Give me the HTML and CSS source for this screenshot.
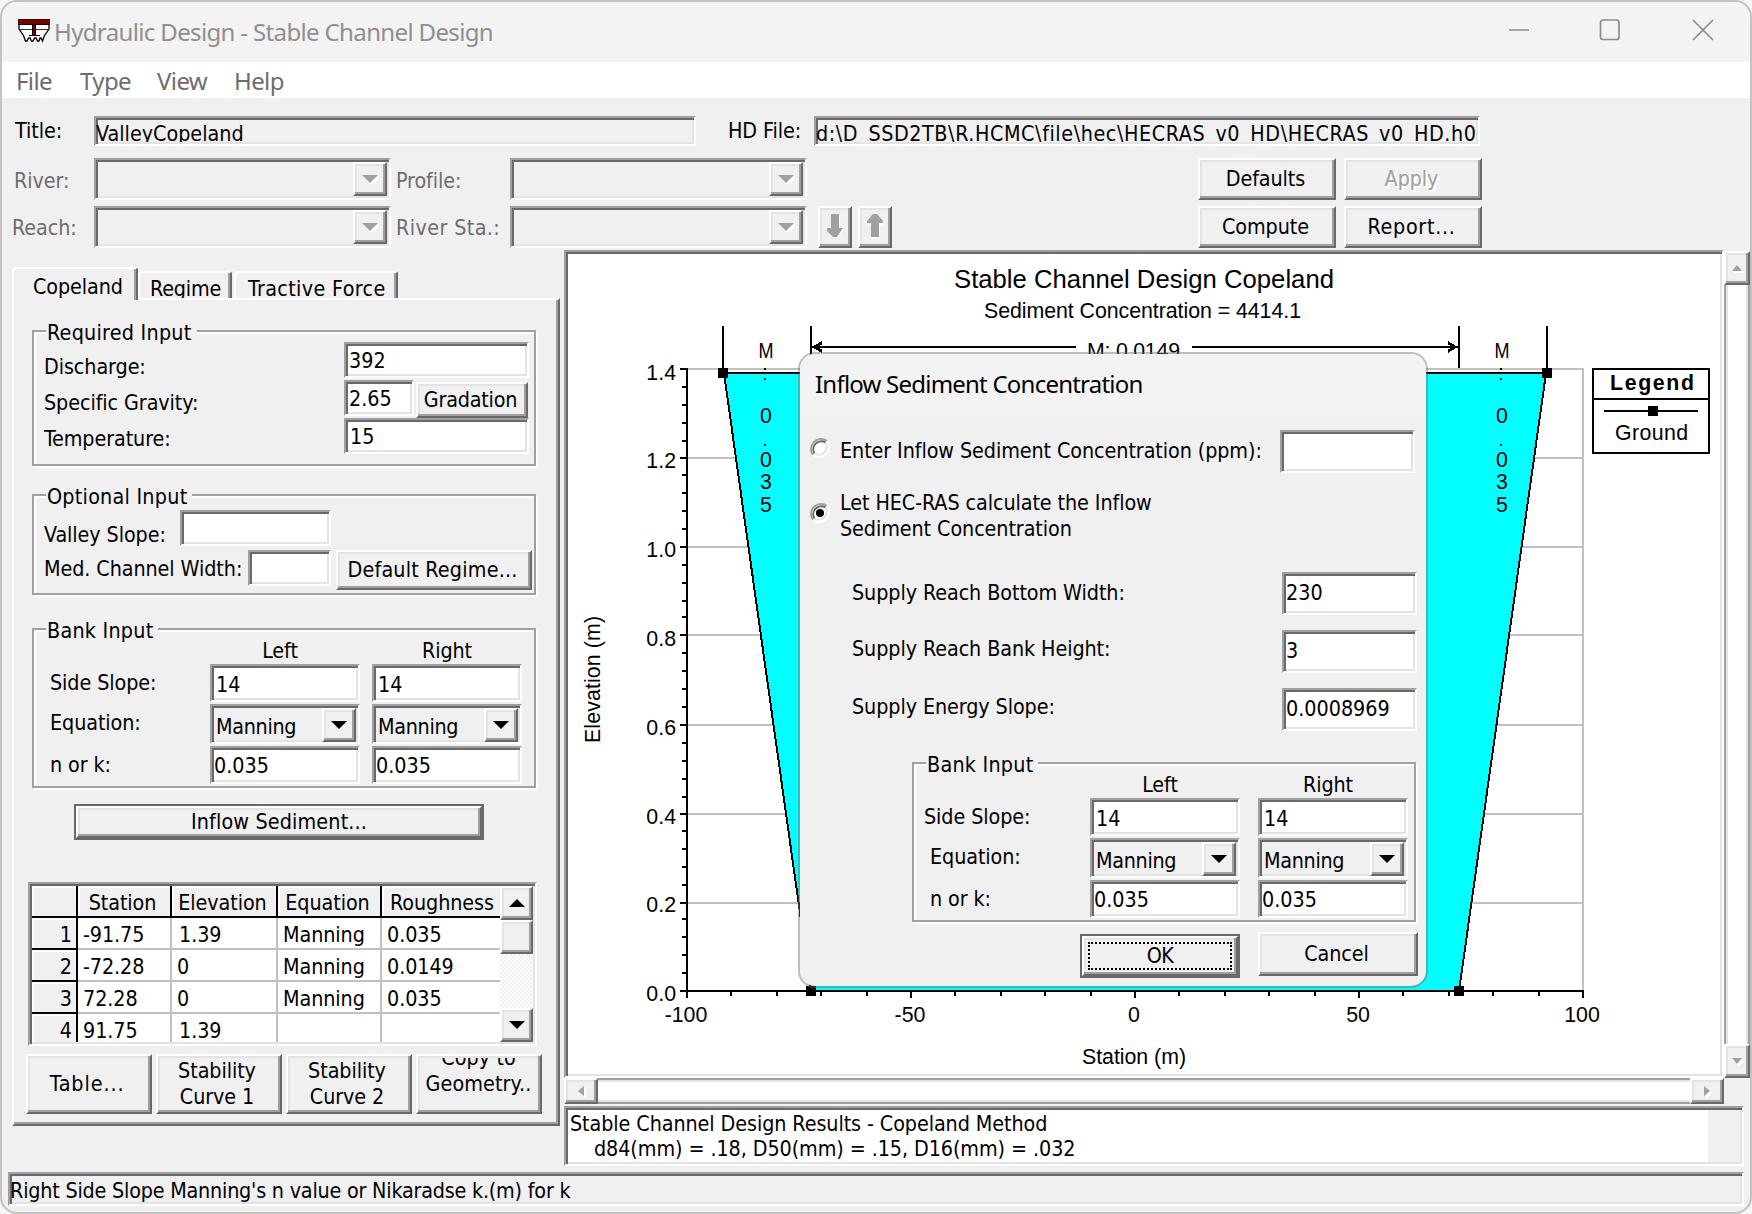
FILE: index.html
```html
<!DOCTYPE html>
<html lang="en">
<head>
<meta charset="utf-8">
<title>Hydraulic Design - Stable Channel Design</title>
<link rel="stylesheet" href="styles.css">
</head>
<body>
<div class="window">
  <header class="titlebar">
    <svg class="app-icon" width="32" height="24" viewBox="0 0 32 24">
      <path d="M0 5H32V10L26 17L24 22L8 22L6 17L0 10Z" fill="#fff"/>
      <path d="M1 5V10L5.500 16.500L7.500 22H9L10.500 19H12L13.500 22H15L16.500 19H18L19.500 22H21L22 19H23L24.500 22L26.500 16.500L31 10V5" stroke="#000" stroke-width="1.3" fill="none"/>
      <g shape-rendering="crispEdges">
        <path d="M2 10H30" stroke="#2020c0" stroke-width="1"/>
        <rect x="0" y="0" width="32" height="5" fill="#800000"/>
        <rect x="0" y="5" width="32" height="1" fill="#000"/>
        <rect x="0" y="0" width="32" height="1" fill="#400000"/>
        <rect x="14" y="6" width="4" height="11" fill="#000"/><rect x="15" y="6" width="2" height="10" fill="#800000"/>
        <rect x="11" y="16" width="11" height="1" fill="#000"/>
      </g>
    </svg>
    <h1 class="caption">Hydraulic Design - Stable Channel Design</h1>
    <svg class="win-controls" width="206" height="24" viewBox="0 0 206 24" fill="none" stroke="#8c8c8c" stroke-width="1.700">
      <path d="M1 12H21"/><rect x="92.500" y="2" width="18.500" height="19.500" rx="2.500"/><path d="M185 2L205 22M205 2L185 22"/>
    </svg>
  </header>
  <nav class="menubar"><span class="m-file">File</span><span class="m-type">Type</span><span class="m-view">View</span><span class="m-help">Help</span></nav>

  <section class="toolbar">
    <div class="tool-row first">
      <span class="label l-title">Title:</span>
      <div class="sunken readout r-title"><span>ValleyCopeland</span></div>
      <span class="label l-hd">HD File:</span>
      <div class="sunken readout r-hd"><span>d:\D_SSD2TB\R.HCMC\file\hec\HECRAS_v0_HD\HECRAS_v0_HD.h02</span></div>
    </div>
    <div class="tool-row">
      <span class="label dim l-river">River:</span>
      <div class="sunken combo top-combo"><i class="raised drop off"></i></div>
      <span class="label dim l-mid">Profile:</span>
      <div class="sunken combo top-combo"><i class="raised drop off"></i></div>
      <button class="raised btn tool-btn at-defaults">Defaults</button>
      <button class="raised btn tool-btn disabled">Apply</button>
    </div>
    <div class="tool-row">
      <span class="label dim l-reach">Reach:</span>
      <div class="sunken combo top-combo"><i class="raised drop off"></i></div>
      <span class="label dim l-mid wide">River Sta.:</span>
      <div class="sunken combo top-combo"><i class="raised drop off"></i></div>
      <button class="raised btn arrow-btn down"><svg width="18" height="26" viewBox="0 0 18 26"><path d="M6 2H14V15H18L11 24H9L2 17H6Z" fill="#fff"/><path d="M5 0H13V14H17L11 23H7L1 17V14H5Z" fill="#a0a0a0"/></svg></button>
      <button class="raised btn arrow-btn up"><svg width="18" height="26" viewBox="0 0 18 26"><path d="M6 25V11H3L9 3H11L18 12H14V25Z" fill="#fff"/><path d="M5 23V9H1V7L7 0H11L17 7V9H13V23Z" fill="#a0a0a0"/></svg></button>
      <button class="raised btn tool-btn at-compute">Compute</button>
      <button class="raised btn tool-btn dots">Report...</button>
    </div>
  </section>

  <main class="main">
    <section class="left">
      <div class="tabs"><div class="tab active">Copeland</div><div class="tab t-regime">Regime</div><div class="tab t-tractive">Tractive Force</div></div>
      <div class="panel">
        <div class="group required">
          <div class="legend">Required Input</div>
          <div class="req-body">
            <div class="req-labels"><div>Discharge:</div><div>Specific Gravity:</div><div>Temperature:</div></div>
            <div class="req-fields">
              <div class="sunken field">392</div>
              <div class="req-pair"><div class="sunken field gravity">2.65</div><button class="raised btn gradation">Gradation</button></div>
              <div class="sunken field temp">15</div>
            </div>
          </div>
        </div>
        <div class="group optional">
          <div class="legend">Optional Input</div>
          <div class="opt-row one"><span class="label">Valley Slope:</span><div class="sunken field"></div></div>
          <div class="opt-row two"><span class="label">Med. Channel Width:</span><div class="sunken field"></div><button class="raised btn regime-btn">Default Regime...</button></div>
        </div>
        <div class="group bank">
          <div class="legend">Bank Input</div>
          <div class="bank-grid">
            <span></span><span class="head h-left">Left</span><span class="head">Right</span>
            <span class="label">Side Slope:</span><div class="sunken field slope">14</div><div class="sunken field slope">14</div>
            <span class="label">Equation:</span><div class="sunken combo">Manning<i class="raised drop"></i></div><div class="sunken combo">Manning<i class="raised drop"></i></div>
            <span class="label">n or k:</span><div class="sunken field">0.035</div><div class="sunken field">0.035</div>
          </div>
        </div>
        <button class="btn default-btn inflow"><span class="raised face">Inflow Sediment...</span></button>
        <div class="sunken sheet">
          <div class="cells">
            <div class="th corner"></div><div class="th">Station</div><div class="th elev">Elevation</div><div class="th">Equation</div><div class="th rough">Roughness</div>
            <div class="rh">1</div><div>-91.75</div><div class="sp">1.39</div><div>Manning</div><div>0.035</div>
            <div class="rh">2</div><div>-72.28</div><div>0</div><div>Manning</div><div>0.0149</div>
            <div class="rh">3</div><div>72.28</div><div>0</div><div>Manning</div><div>0.035</div>
            <div class="rh">4</div><div>91.75</div><div class="sp">1.39</div><div></div><div></div>
          </div>
          <div class="sheet-scroll"><i class="raised tri-up"></i><i class="raised thumb"></i><b></b><i class="raised tri-down"></i></div>
        </div>
        <div class="bottom-btns">
          <button class="raised btn table-btn">Table...</button>
          <button class="raised btn">Stability<br>Curve 1</button>
          <button class="raised btn">Stability<br>Curve 2</button>
          <button class="raised btn copy"><span class="clip"><span class="copy-text">Copy to<br>Geometry..</span></span></button>
        </div>
      </div>
    </section>

    <section class="right">
      <div class="plot-row">
        <div class="sunken plot">
          <svg class="chart" width="1152" height="820" viewBox="568 254 1152 820">
            <g stroke="#c0c0c0" stroke-width="2" shape-rendering="crispEdges" fill="none">
              <path d="M688 369H1584M688 458H1584M688 547H1584M688 635H1584M688 725H1584M688 814H1584M688 903H1584M1583 368V991"/>
            </g>
            <path d="M724 373H1546L1459 991H811Z" fill="#0ff" shape-rendering="crispEdges"/>
            <g stroke="#000" stroke-width="2" shape-rendering="crispEdges" fill="none">
              <path d="M723 373H1547"/>
              <path d="M724 373L811 991M1459 991L1546 373"/>
              <path d="M687 368V998M680 991H1584"/>
              <path d="M680 369H687M680 458H687M680 547H687M680 635H687M680 725H687M680 814H687M680 903H687"/>
              <path d="M682 387H687M682 405H687M682 423H687M682 441H687M682 475H687M682 493H687M682 511H687M682 529H687M682 565H687M682 583H687M682 601H687M682 617H687M682 653H687M682 671H687M682 689H687M682 707H687M682 743H687M682 761H687M682 779H687M682 797H687M682 831H687M682 849H687M682 867H687M682 885H687M682 919H687M682 937H687M682 955H687M682 973H687"/>
              <path d="M911 991V998M1135 991V998M1359 991V998M1583 991V998"/>
              <path d="M731 991V996M777 991V996M821 991V996M867 991V996M955 991V996M1001 991V996M1045 991V996M1091 991V996M1179 991V996M1225 991V996M1269 991V996M1315 991V996M1403 991V996M1449 991V996M1493 991V996M1539 991V996"/>
              <path d="M723 326V373M811 326V369M1459 326V368M1547 326V373M812 347H1076M1192 347H1458"/>
              <rect x="1593" y="369" width="116" height="84"/><path d="M1593 399H1709M1604 411H1698"/>
            </g>
            <g fill="#000" shape-rendering="crispEdges">
              <path d="M812 347L822 341V345H820V349H822V353ZM1458 347L1448 341V345H1450V349H1448V353Z"/>
              <rect x="718" y="368" width="10" height="10"/><rect x="1542" y="368" width="10" height="10"/>
              <rect x="806" y="986" width="10" height="10"/><rect x="1454" y="986" width="10" height="10"/>
              <rect x="1648" y="406" width="10" height="10"/>
              <path d="M764 368h2v2h-2zM764 378h2v2h-2zM764 444h2v2h-2zM1500 368h2v2h-2zM1500 378h2v2h-2zM1500 444h2v2h-2z"/>
            </g>
            <text class="t-main" x="954" y="288" textLength="380" lengthAdjust="spacingAndGlyphs">Stable Channel Design Copeland</text>
            <text x="984" y="318" textLength="317">Sediment Concentration = 4414.1</text>
            <text x="1087" y="358" textLength="93">M: 0.0149</text>
            <g text-anchor="end"><text x="676" y="380">1.4</text><text x="676" y="468">1.2</text><text x="676" y="557">1.0</text><text x="676" y="646">0.8</text><text x="676" y="735">0.6</text><text x="676" y="824">0.4</text><text x="676" y="912">0.2</text><text x="676" y="1001">0.0</text></g>
            <g text-anchor="middle"><text x="686" y="1022">-100</text><text x="910" y="1022">-50</text><text x="1134" y="1022">0</text><text x="1358" y="1022">50</text><text x="1582" y="1022">100</text></g>
            <g text-anchor="middle"><text x="766" y="358" textLength="15" lengthAdjust="spacingAndGlyphs">M</text><text x="766" y="423">0</text><text x="766" y="467">0</text><text x="766" y="489">3</text><text x="766" y="512">5</text></g>
            <g text-anchor="middle"><text x="1502" y="358" textLength="15" lengthAdjust="spacingAndGlyphs">M</text><text x="1502" y="423">0</text><text x="1502" y="467">0</text><text x="1502" y="489">3</text><text x="1502" y="512">5</text></g>
            <text x="1082" y="1064" textLength="104">Station (m)</text>
            <text transform="translate(600 743) rotate(-90)" textLength="127">Elevation (m)</text>
            <text class="t-bold" x="1610" y="390" textLength="84">Legend</text>
            <text x="1615" y="440" textLength="73">Ground</text>
          </svg>
        </div>
        <div class="vscroll"><i class="raised sb-up"></i><b></b><i class="raised sb-down"></i></div>
      </div>
      <div class="hscroll"><i class="raised sb-left"></i><b></b><i class="raised sb-right"></i></div>
      <div class="sunken results"><div class="lines"><div>Stable Channel Design Results - Copeland Method</div><div class="indent">d84(mm) = .18, D50(mm) = .15, D16(mm) = .032</div></div></div>
    </section>
  </main>
  <footer class="sunken status">Right Side Slope Manning's n value or Nikaradse k.(m) for k</footer>

  <div class="dialog">
    <div class="dlg-title">Inflow Sediment Concentration</div>
    <div class="dlg-row choice1">
      <svg class="radio" width="22" height="22" viewBox="0 0 22 22"><circle cx="11" cy="11" r="9" fill="#fff"/><path d="M4 18A10 10 0 0 1 18 4" fill="none" stroke="#a0a0a0" stroke-width="2"/><path d="M5.500 16.500A8 8 0 0 1 16.500 5.500" fill="none" stroke="#696969" stroke-width="2"/><path d="M18 4A10 10 0 0 1 4 18" fill="none" stroke="#fff" stroke-width="2"/><path d="M16.500 5.500A8 8 0 0 1 5.500 16.500" fill="none" stroke="#e3e3e3" stroke-width="2"/></svg>
      <span class="label">Enter Inflow Sediment Concentration (ppm):</span>
      <div class="sunken field tall"></div>
    </div>
    <div class="dlg-row choice2">
      <svg class="radio" width="22" height="22" viewBox="0 0 22 22"><circle cx="11" cy="11" r="9" fill="#fff"/><path d="M4 18A10 10 0 0 1 18 4" fill="none" stroke="#a0a0a0" stroke-width="2"/><path d="M5.500 16.500A8 8 0 0 1 16.500 5.500" fill="none" stroke="#696969" stroke-width="2"/><path d="M18 4A10 10 0 0 1 4 18" fill="none" stroke="#fff" stroke-width="2"/><path d="M16.500 5.500A8 8 0 0 1 5.500 16.500" fill="none" stroke="#e3e3e3" stroke-width="2"/><circle cx="11" cy="11" r="4" fill="#000"/></svg>
      <span class="label">Let HEC-RAS calculate the Inflow<br>Sediment Concentration</span>
    </div>
    <div class="supply">
      <div class="dlg-row"><span class="label s1">Supply Reach Bottom Width:</span><div class="sunken field tall">230</div></div>
      <div class="dlg-row"><span class="label s2">Supply Reach Bank Height:</span><div class="sunken field tall">3</div></div>
      <div class="dlg-row"><span class="label s2">Supply Energy Slope:</span><div class="sunken field tall">0.0008969</div></div>
    </div>
    <div class="group bank dlg-bank">
      <div class="legend">Bank Input</div>
      <div class="bank-grid">
        <span></span><span class="head h-left">Left</span><span class="head r-head">Right</span>
        <span class="label out">Side Slope:</span><div class="sunken field slope">14</div><div class="sunken field slope">14</div>
        <span class="label">Equation:</span><div class="sunken combo">Manning<i class="raised drop"></i></div><div class="sunken combo">Manning<i class="raised drop"></i></div>
        <span class="label">n or k:</span><div class="sunken field">0.035</div><div class="sunken field">0.035</div>
      </div>
    </div>
    <div class="dlg-btns">
      <button class="btn default-btn ok"><span class="raised face"><span class="focus">OK</span></span></button>
      <button class="raised btn cancel">Cancel</button>
    </div>
  </div>
</div>
</body>
</html>
```
FILE: styles.css
```css
* { box-sizing: border-box; }
body { margin: 0; background: #f4f4f4; overflow: hidden; }

.window {
  position: relative;
  display: flex;
  flex-direction: column;
  width: 1752px;
  height: 1214px;
  border: 2px solid #c3c3c3;
  border-radius: 17px;
  overflow: hidden;
  background: #f0f0f0;
  color: #000;
  font: 21.33px/26px "DejaVu Sans Condensed", "DejaVu Sans", sans-serif;
  font-stretch: condensed;
  letter-spacing: -0.08px;
  white-space: nowrap;
}
.window > * { flex: none; }

/* bevels */
.sunken {
  border: 2px solid;
  border-color: #a0a0a0 #fff #fff #a0a0a0;
  box-shadow: inset 2px 2px 0 #696969, inset -2px -2px 0 #e3e3e3;
}
.raised {
  border: 2px solid;
  border-color: #fff #696969 #696969 #fff;
  box-shadow: inset -2px -2px 0 #a0a0a0, inset 2px 2px 0 #e3e3e3;
  background: #f0f0f0;
}
.btn {
  display: flex;
  align-items: center;
  justify-content: center;
  margin: 0;
  padding: 0 3px 0 0;
  font: inherit;
  letter-spacing: inherit;
  color: #000;
  flex: none;
}
.disabled { color: #a0a0a0; text-shadow: 2px 2px 0 #fff; }
.default-btn { padding: 0; border: 2px solid #696969; background: #696969; }
.face { display: flex; align-items: center; justify-content: center; width: 100%; height: 100%; }
.label { flex: none; }
.dim { color: #6d6d6d; }
.dots { letter-spacing: 0.7px; }

/* caption and menu */
.titlebar {
  display: flex;
  align-items: flex-start;
  height: 60px;
  padding-left: 16px;
  background: #f3f3f3;
}
.app-icon { margin-top: 17px; }
.caption {
  margin: 0 0 0 4px;
  width: 1454px;
  font: 400 24px/60px "Noto Sans", sans-serif;
  letter-spacing: -0.64px;
  color: #8f8f8f;
}
.win-controls { margin-top: 16px; }
.menubar {
  display: flex;
  height: 36px;
  padding: 1px 0 0 14px;
  background: #fff;
  color: #6d6d6d;
  font: 24px/36px "Noto Sans", sans-serif;
  letter-spacing: -0.6px;
}
.m-file { width: 64px; }
.m-type { width: 77px; }
.m-view { width: 77px; }

/* toolbar */
.toolbar { height: 152px; padding-top: 18px; }
.tool-row { display: flex; align-items: flex-start; height: 48px; }
.tool-row.first { height: 42px; }
.l-title { margin: 2px 0 0 13px; width: 79px; }
.l-hd { margin: 2px 0 0 32px; width: 86px; }
.readout { height: 30px; }
.readout span { display: block; margin: 2px 2px 0 0; height: 22px; padding-top: 1px; overflow: hidden; }
.r-title { width: 602px; }
.r-title span { letter-spacing: 0; }
.r-hd { width: 666px; }
.r-hd span { letter-spacing: 0.58px; }
.l-river { margin: 10px 0 0 12px; width: 80px; }
.l-reach { margin: 9px 0 0 10px; width: 82px; }
.l-mid { margin: 10px 0 0 5px; width: 114px; }
.l-mid.wide { margin-top: 9px; letter-spacing: 0.4px; }
.combo { display: flex; justify-content: space-between; padding: 8px 2px 2px 4px; flex: none; letter-spacing: -0.3px; }
.top-combo { width: 297px; height: 42px; padding: 2px; justify-content: flex-end; }
.drop {
  display: flex;
  align-items: center;
  justify-content: center;
  width: 34px;
  height: 34px;
  flex: none;
}
.drop::before { content: ""; border: 8px solid transparent; border-top: 8px solid #000; border-bottom: 0; }
.drop.off::before { border-top-color: #a0a0a0; filter: drop-shadow(2px 2px 0 #fff); }
.bank .drop { margin-top: -6px; }
.tool-btn { width: 138px; height: 42px; margin-left: 8px; }
.at-defaults { margin-left: 391px; }
.at-compute { margin-left: 306px; }
.arrow-btn { width: 34px; height: 42px; margin-left: 6px; padding: 0; }
.arrow-btn.down { margin-left: 11px; }

/* left side */
.main { display: flex; height: 916px; }
.left { width: 562px; padding: 17px 0 0 10px; }
.tabs { display: flex; align-items: flex-end; height: 31px; }
.tab {
  height: 27px;
  border: solid;
  border-width: 2px 2px 0 2px;
  border-color: #fff #696969 #fff #fff;
  border-radius: 5px 3px 0 0;
  box-shadow: inset -2px 0 0 #a0a0a0;
  overflow: hidden;
  padding: 3px 0 0 10px;
  background: #f0f0f0;
}
.tab.active { position: relative; height: 33px; width: 126px; margin-bottom: -2px; padding: 5px 0 0 19px; }
.t-regime { width: 94px; letter-spacing: -0.2px; }
.t-tractive { width: 164px; margin-left: 2px; padding-left: 12px; letter-spacing: 0.35px; }
.panel {
  width: 548px;
  height: 828px;
  border: 2px solid;
  border-color: #fff #696969 #696969 #fff;
  box-shadow: inset -2px -2px 0 #a0a0a0;
  padding-top: 30px;
}
.group {
  width: 504px;
  margin-left: 18px;
  border: 2px solid #a0a0a0;
  box-shadow: 2px 2px 0 #fff, inset 2px 2px 0 #fff;
}
.legend { width: fit-content; height: 26px; margin: -13px 0 0 12px; padding: 1px 5px 0 1px; background: #f0f0f0; letter-spacing: 0.25px; }
.required { height: 136px; }
.optional { height: 101px; margin-top: 28px; }
.bank { height: 160px; margin-top: 33px; }
.field { height: 36px; padding: 4px 2px 0 3px; flex: none; background: #fff; letter-spacing: 0; }
.req-body { display: flex; align-items: flex-start; padding-left: 10px; }
.req-labels { width: 300px; margin-top: 4px; line-height: 36px; }
.req-fields { display: flex; flex-direction: column; gap: 2px; width: 185px; margin-top: -3px; }
.req-pair { display: flex; height: 36px; }
.gravity { width: 70px; }
.temp { padding-left: 4px; }
.gradation { width: 112px; height: 36px; margin: 2px 0 0 2px; letter-spacing: -0.2px; }
.opt-row { display: flex; align-items: flex-start; padding-left: 10px; height: 40px; }
.opt-row.one { margin-top: 1px; }
.one .label { width: 136px; margin-top: 12px; }
.one .field { width: 151px; }
.two .label { width: 204px; margin-top: 6px; }
.two .field { width: 83px; }
.regime-btn { width: 196px; height: 40px; margin-left: 5px; letter-spacing: 0.2px; }
.bank-grid {
  display: grid;
  grid-template-columns: 160px 150px 150px;
  grid-template-rows: 26px 40px 42px 38px;
  column-gap: 0;
  margin: -5px 0 0 16px;
}
.bank-grid > :nth-child(3n) { margin-left: 12px; margin-right: -12px; }
.bank-grid .head { text-align: center; }
.bank-grid .h-left { padding-right: 10px; }
.bank-grid .label { margin-top: 6px; }
.bank-grid .field { height: 38px; padding-top: 5px; padding-left: 2px; }
.bank-grid .slope { padding-left: 4px; padding-top: 6px; }
.bank-grid .combo { height: 40px; }
.inflow { width: 410px; height: 36px; margin: 16px 0 0 60px; letter-spacing: 0.15px; }
.sheet { display: flex; width: 509px; height: 164px; margin: 42px 0 0 14px; padding: 2px; overflow: hidden; }
.cells {
  display: grid;
  grid-template-columns: 46px 94px 106px 104px 118px;
  grid-auto-rows: 32px;
  height: 156px;
  width: 468px;
  overflow: hidden;
  background: #fff;
}
.cells > div { padding: 4px 0 0 5px; border: solid #c0c0c0; border-width: 0 2px 2px 0; }
.cells > div:nth-child(5n) { border-right: 0; }
.cells > .sp { padding-left: 7px; }
.cells > .th { padding: 4px 3px 0 0; text-align: center; background: #f0f0f0; border-color: #000; box-shadow: inset 2px 2px 0 #fff; }
.cells > .rough { text-align: left; padding-left: 8px; }
.cells > .rh { text-align: right; padding: 4px 4px 0 0; background: #f0f0f0; border-color: #000; box-shadow: inset 2px 2px 0 #fff; }
.sheet-scroll { display: flex; flex-direction: column; width: 33px; height: 156px; }
.sheet-scroll i, .vscroll i, .hscroll i { display: flex; align-items: center; justify-content: center; height: 34px; flex: none; }
.sheet-scroll b { flex: 1; background: repeating-conic-gradient(#f0f0f0 0 25%, #fff 0 50%) 0 0 / 4px 4px; }
.tri-up::before { content: ""; border: 8px solid transparent; border-bottom: 8px solid #000; border-top: 0; }
.tri-down::before { content: ""; border: 8px solid transparent; border-top: 8px solid #000; border-bottom: 0; }
.bottom-btns { display: flex; gap: 4px; margin: 8px 0 0 12px; }
.bottom-btns .btn { width: 126px; height: 60px; padding-right: 4px; }
.bottom-btns .table-btn { letter-spacing: 0.9px; }
.bottom-btns .copy { align-items: flex-start; padding-right: 1px; letter-spacing: 0.1px; }
.clip { display: block; height: 52px; margin-top: 2px; overflow: hidden; }
.copy-text { display: block; margin-top: -13px; }

/* plot */
.right { width: 1186px; }
.plot-row { display: flex; height: 828px; }
.plot { width: 1160px; height: 828px; padding: 2px; background: #fff; }
.chart { display: block; font: 21.33px "Liberation Sans", Arial, sans-serif; letter-spacing: 0; }
.t-main { font-size: 26.67px; }
.t-bold { font-weight: 700; }
.vscroll { display: flex; flex-direction: column; width: 26px; height: 828px; padding-top: 1px; }
.vscroll b { flex: 1; background: #fff; border: solid #a0a0a0; border-width: 0 2px; box-shadow: inset 2px 0 0 #e3e3e3, inset -2px 0 0 #e3e3e3; }
.hscroll { display: flex; width: 1160px; height: 26px; }
.hscroll b { flex: 1; background: #fff; border: solid #a0a0a0; border-width: 2px 0; box-shadow: inset 0 2px 0 #e3e3e3, inset 0 -2px 0 #e3e3e3; }
.hscroll i { width: 34px; height: 26px; }
.sb-up::before, .sb-down::before, .sb-left::before, .sb-right::before { content: ""; border: 5px solid transparent; filter: drop-shadow(2px 2px 0 #fff); }
.sb-up::before { border-bottom: 6px solid #a0a0a0; border-top: 0; }
.sb-down::before { border-top: 6px solid #a0a0a0; border-bottom: 0; }
.sb-left::before { border-right: 6px solid #a0a0a0; border-left: 0; }
.sb-right::before { border-left: 6px solid #a0a0a0; border-right: 0; }
.results { width: 1180px; height: 60px; margin-top: 2px; padding: 2px; }
.lines { width: 1140px; height: 52px; padding: 1px 0 0 2px; background: #fff; }
.indent { padding-left: 24px; margin-top: -1px; }
.status { width: 1736px; height: 34px; margin: 6px 0 0 6px; padding: 4px 0 0 0; letter-spacing: -0.2px; }

/* dialog over the plot */
.dialog {
  position: absolute;
  left: 796px;
  top: 350px;
  width: 630px;
  height: 636px;
  border: 2px solid rgba(110, 110, 110, .45);
  border-radius: 17px;
  background: #f0f0f0;
  background-clip: padding-box;
  overflow: hidden;
}
.dlg-title { height: 60px; padding-left: 15px; background: #f3f3f3; font: 24px/60px "Noto Sans", sans-serif; letter-spacing: -0.78px; }
.dlg-row { display: flex; align-items: flex-start; height: 58px; }
.radio { flex: none; margin-left: 9px; }
.choice1 { margin-top: 16px; height: 44px; }
.choice1 .radio { margin-top: 7px; }
.choice1 .label { margin: 8px 0 0 9px; width: 440px; }
.choice2 { margin-top: 16px; height: 52px; }
.choice2 .radio { margin-top: 12px; }
.choice2 .label { margin-left: 9px; }
.tall { width: 135px; height: 43px; padding-top: 6px; padding-left: 2px; }
.supply { margin-top: 30px; padding-left: 52px; }
.supply .label { width: 430px; }
.s1 { margin-top: 8px; }
.s2 { margin-top: 6px; }
.dlg-bank { margin: 16px 0 0 112px; width: 504px; }
.dlg-bank .bank-grid > :nth-child(3n) { margin-left: 18px; margin-right: -18px; }
.dlg-bank .out { margin-left: -6px; }
.dlg-bank .r-head { padding-right: 10px; }
.dlg-btns { display: flex; margin-top: 10px; }
.ok { width: 160px; height: 44px; margin: 2px 0 0 280px; letter-spacing: -0.6px; }
.focus { width: 144px; height: 28px; line-height: 26px; border: 2px dotted #000; display: flex; align-items: center; justify-content: center; }
.cancel { width: 160px; height: 44px; margin-left: 18px; }
```
